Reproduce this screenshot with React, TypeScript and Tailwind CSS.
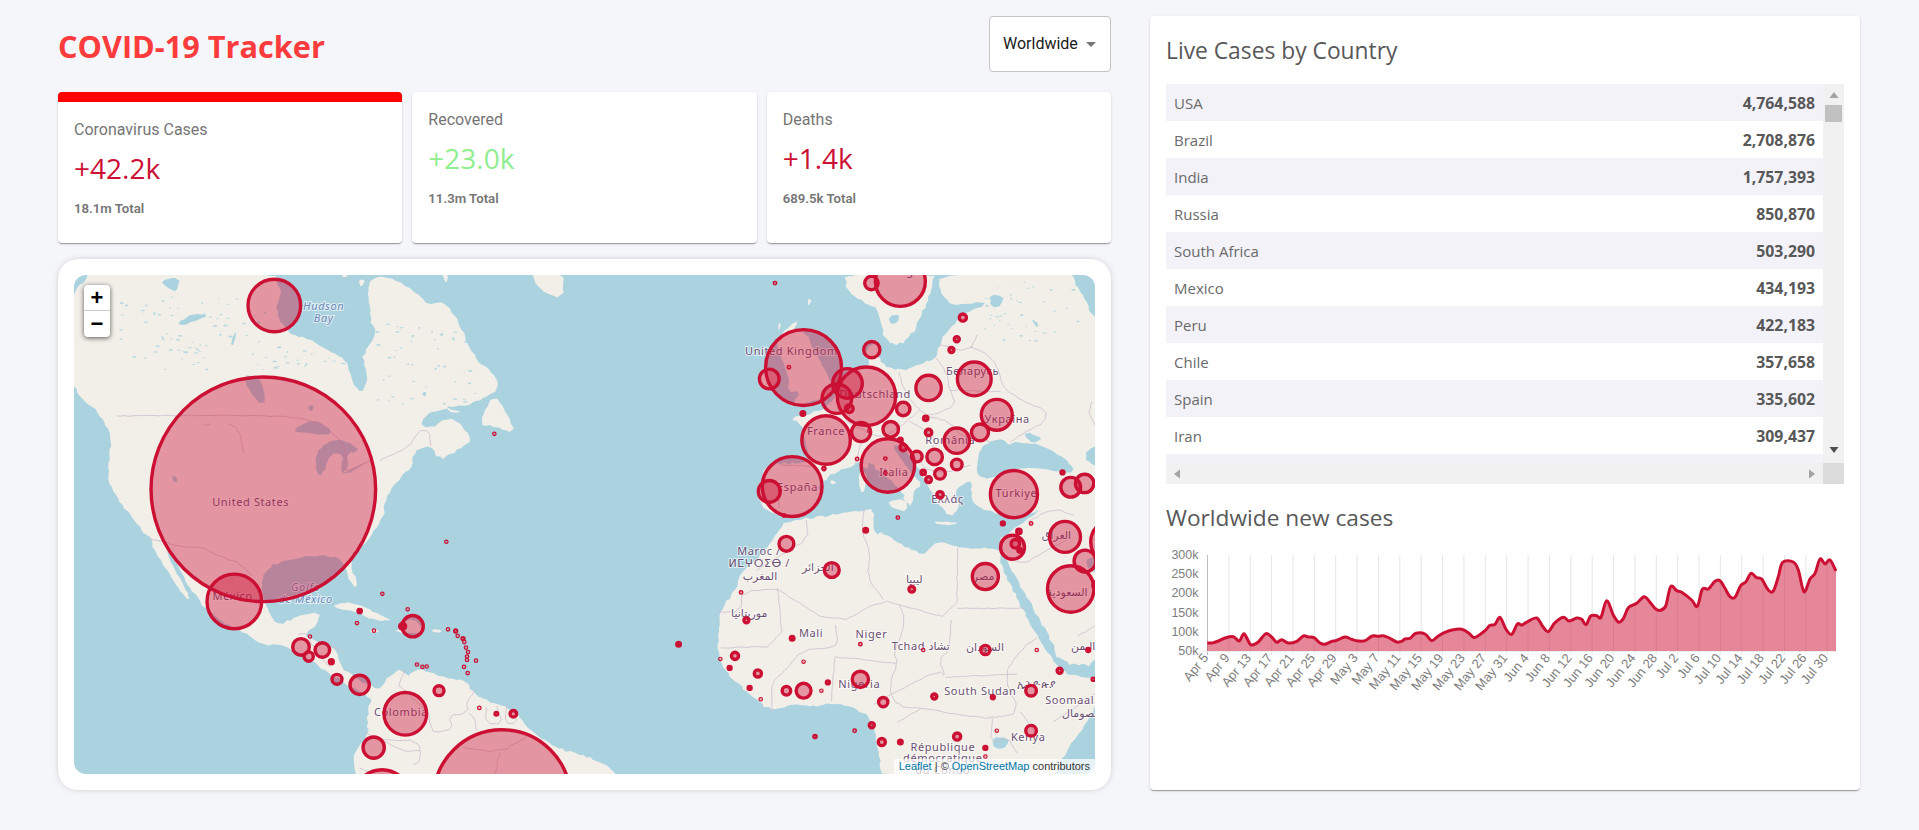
import React from "react";

type Pt = [number, number];
const Z5 = (p: Pt): Pt => [60 + p[0] / 3, 260 + p[1] / 2.9];
const Z6 = (p: Pt): Pt => [560 + p[0] / 2.8, 260 + p[1] / 2.9];
const Z9 = (p: Pt): Pt => [720 + p[0] / 2.96, 275 + p[1] / 3];
const Z10 = (p: Pt): Pt => [340 + p[0] / 3, 640 + p[1] / 2.89];
const pts = (f: (p: Pt) => Pt, a: number[]): Pt[] => {
  const o: Pt[] = [];
  for (let i = 0; i < a.length; i += 2) o.push(f([a[i], a[i + 1]]));
  return o;
};
const str = (a: Pt[]) => a.map((p) => p[0].toFixed(1) + "," + p[1].toFixed(1)).join(" ");
const rnd = (i: number) => {
  const v = Math.sin(i * 12.9898 + 4.1) * 43758.5453;
  return v - Math.floor(v);
};
let seed = 1;
const organic = (a: Pt[], closed = true, amp = 1.1): string => {
  const n = a.length;
  const sm: Pt[] = [];
  const m = closed ? n : n - 1;
  if (!closed) sm.push(a[0]);
  for (let i = 0; i < m; i++) {
    const p = a[i], q = a[(i + 1) % n];
    sm.push([p[0] * 0.75 + q[0] * 0.25, p[1] * 0.75 + q[1] * 0.25]);
    sm.push([p[0] * 0.25 + q[0] * 0.75, p[1] * 0.25 + q[1] * 0.75]);
  }
  if (!closed) sm.push(a[n - 1]);
  const out: Pt[] = [];
  const k = closed ? sm.length : sm.length - 1;
  for (let i = 0; i < k; i++) {
    const p = sm[i], q = sm[(i + 1) % sm.length];
    const len = Math.hypot(q[0] - p[0], q[1] - p[1]);
    const steps = Math.max(1, Math.round(len / 4));
    for (let s = 0; s < steps; s++) {
      const t = s / steps;
      seed++;
      out.push([p[0] + (q[0] - p[0]) * t + (rnd(seed) - 0.5) * 2 * amp, p[1] + (q[1] - p[1]) * t + (rnd(seed + 0.37) - 0.5) * 2 * amp]);
    }
  }
  if (!closed) out.push(sm[sm.length - 1]);
  return str(out);
};

const northAmerica = pts(Z5, [
  30, 30, 300, 30, 640, 30, 665, 100, 648, 140, 660, 180, 690, 215, 740, 225, 800, 260, 860, 290, 870, 340, 905, 390, 925, 340, 905, 290, 925, 250,
  950, 210, 930, 170, 925, 90, 930, 50, 1000, 52, 1080, 100, 1100, 130, 1160, 120, 1200, 190, 1240, 280, 1310, 340, 1315, 380, 1270, 400, 1230, 420,
  1130, 432, 1080, 470, 1110, 490, 1165, 455, 1205, 480, 1240, 525, 1180, 560, 1140, 580, 1105, 535, 1060, 560, 1060, 600, 1010, 640, 980, 690, 965, 760,
  905, 830, 872, 860, 880, 910, 895, 950, 875, 945, 850, 870, 790, 855, 700, 865, 620, 890, 600, 950, 620, 1010, 650, 1060, 720, 1030, 780, 1020, 770, 1060,
  730, 1090, 760, 1100, 830, 1130, 845, 1180, 880, 1210, 935, 1240, 965, 1248, 950, 1290, 900, 1250, 860, 1230, 800, 1195, 740, 1150, 680, 1120, 610, 1115,
  540, 1075, 450, 1030, 390, 950, 310, 820, 270, 810, 200, 730, 145, 650, 145, 600, 155, 520, 120, 440, 60, 400, 30, 345,
]);
const americaSmall = [
  [265, 810, 310, 820, 345, 900, 395, 985, 375, 980, 320, 900],
  [1255, 480, 1300, 385, 1345, 450, 1365, 505, 1300, 480],
  [820, 1000, 880, 990, 960, 1030, 1000, 1045, 940, 1045, 890, 1020, 830, 1010],
  [1025, 1050, 1060, 1040, 1095, 1075, 1050, 1085, 1000, 1075, 1025, 1070],
  [1118, 1072, 1145, 1072, 1145, 1080, 1118, 1080],
  [930, 1072, 955, 1072, 955, 1082, 930, 1082],
  [1410, 30, 1510, 30, 1510, 115, 1440, 90],
  [1150, 428, 1210, 440, 1180, 445],
  [835, 30, 870, 30, 855, 58],
  [895, 60, 915, 55, 905, 82],
  [1140, 30, 1165, 30, 1160, 75],
];
const americaLakes = [
  [695, 495, 760, 460, 820, 495, 800, 510, 730, 500],
  [770, 620, 765, 560, 800, 530, 830, 520, 870, 530, 900, 555, 860, 560, 865, 600, 845, 620, 905, 590, 930, 580, 850, 628, 842, 600, 852, 565, 810, 560, 790, 622],
  [545, 335, 600, 335, 620, 410, 590, 415],
  [750, 420, 762, 425, 755, 440, 745, 432],
  [350, 185, 400, 155, 450, 160, 400, 178, 370, 190],
  [300, 60, 360, 48, 350, 95, 325, 80],
  [510, 245, 530, 200, 522, 246],
  [335, 625, 350, 630, 352, 645, 338, 640],
  [1085, 385, 1100, 382, 1095, 400],
];

const southAmerica = pts(Z10, [
  95, 165, 120, 140, 150, 100, 190, 85, 205, 110, 215, 90, 260, 85, 310, 110, 380, 115, 395, 150, 440, 175, 480, 185, 540, 220, 570, 265, 660, 315, 740, 335,
  820, 375, 835, 420, 60, 420, 40, 375, 45, 320, 85, 270, 80, 230,
]);

const eurasiaA = pts(Z9, [
  650, -8, 650, 60, 700, 95, 790, 75, 770, 100, 730, 110, 660, 180, 650, 210, 640, 250, 600, 262, 530, 290, 480, 270, 470, 245, 445, 235, 440, 275, 400, 280, 350, 320, 330, 390,
  260, 420, 205, 430, 245, 450, 250, 500, 270, 565, 135, 565, 115, 650, 125, 700, 195, 728, 265, 712, 300, 650, 290, 630, 345, 590, 400, 568, 435, 552, 480, 600, 545, 650, 545, 680,
  570, 692, 575, 640, 600, 632, 560, 590, 505, 510, 540, 510, 600, 600, 630, 660, 650, 690, 680, 725, 710, 700, 690, 650, 740, 615, 745, 640, 745, 690, 850, 725, 905, 720, 960, 700,
]);
const eurasiaB = pts(Z6, [1240, 800, 1228, 830, 1250, 870, 1320, 1000, 1370, 1090, 1400, 1170, 1510, 1178]);
const eurasia = [...eurasiaA, ...eurasiaB, [1110, 600] as Pt, [1110, 265] as Pt];
const scandinavia = pts(Z9, [370, -8, 375, 50, 430, 85, 470, 100, 480, 170, 495, 200, 530, 210, 570, 180, 590, 130, 610, 90, 625, 40, 640, -8]);
const euroIslands = [
  [165, 190, 235, 130, 215, 170, 255, 170, 280, 230, 320, 300, 335, 340, 310, 370, 250, 385, 210, 395, 240, 350, 200, 350, 205, 310, 190, 270, 175, 230],
  [115, 300, 140, 280, 170, 300, 165, 330, 120, 345],
  [495, 680, 550, 670, 555, 710, 510, 700],
  [410, 590, 435, 590, 430, 650, 415, 650],
  [425, 545, 440, 540, 440, 580, 425, 580],
  [325, 615, 345, 620, 330, 630],
  [635, 738, 700, 742, 700, 750, 640, 748],
  [430, 225, 470, 195, 478, 240, 440, 250],
  [170, 150, 182, 140, 175, 170],
  [260, 70, 272, 75, 258, 95],
  [850, 505, 880, 505, 900, 520, 870, 540],
];
const euroWater = [
  [762, 603, 760, 570, 770, 520, 800, 500, 840, 490, 850, 510, 880, 500, 950, 510, 1030, 555, 1050, 592, 1000, 592, 930, 575, 860, 585, 800, 612],
  [800, 55, 840, 65, 835, 90, 800, 98],
  [920, 130, 945, 150, 935, 155],
  [900, 470, 960, 490, 930, 505, 905, 490],
  [500, 125, 530, 115, 530, 140, 505, 150],
  [590, 180, 608, 165, 600, 190],
];
const africa = pts(Z6, [
  1232, 835, 1110, 835, 1060, 815, 1030, 840, 1020, 855, 960, 830, 905, 790, 880, 800, 880, 720, 850, 725, 760, 740, 650, 755, 620, 770, 570, 850, 510, 900, 490, 960, 450, 1010, 440, 1100,
  445, 1160, 470, 1200, 520, 1250, 590, 1310, 650, 1290, 700, 1295, 780, 1285, 850, 1310, 880, 1350, 890, 1420, 905, 1510, 1380, 1510, 1400, 1450, 1510, 1290, 1510, 1215, 1430, 1205, 1400, 1185,
  1335, 1095, 1290, 1000, 1230, 875,
]);
const otherWater6 = [
  [1510, 530, 1460, 570, 1510, 605],
  [1470, 870, 1510, 855, 1510, 915, 1480, 895],
  [1210, 1385, 1255, 1385, 1255, 1410, 1215, 1420],
];
const borders6 = [
  [610, 955, 770, 1060, 905, 985, 950, 1000, 1110, 1045, 1113, 835],
  [610, 955, 625, 1120, 450, 1125],
  [610, 955, 510, 960, 505, 1020, 445, 1020],
  [770, 1060, 780, 1115, 750, 1125, 680, 1130, 630, 1190, 590, 1230, 595, 1310],
  [950, 1000, 965, 1040, 955, 1090, 935, 1135, 945, 1170, 920, 1240, 945, 1295, 1010, 1300, 1130, 1320, 1210, 1330, 1290, 1310, 1240, 1210, 1290, 1130, 1335, 1095],
  [1113, 1010, 1300, 1010],
  [1095, 1045, 1090, 1130, 1060, 1160, 1080, 1210, 1060, 1190, 945, 1250],
  [1080, 1210, 1280, 1200],
  [770, 1150, 940, 1170],
  [770, 1150, 760, 1280],
  [880, 1290, 945, 1250],
  [1380, 1340, 1440, 1300, 1510, 1250],
  [1290, 1310, 1350, 1400],
  [850, 725, 845, 790, 870, 850, 860, 920, 905, 985],
  [690, 755, 695, 810, 610, 860, 550, 900],
  [1210, 1330, 1205, 1400, 1255, 1385, 1280, 1430],
  [945, 1340, 1010, 1300],
  [1420, 810, 1350, 850, 1300, 880, 1260, 870],
  [1310, 760, 1380, 720, 1440, 740],
  [1450, 1090, 1498, 1060],
];
const borders9 = [
  [530, 290, 545, 350, 590, 405, 620, 425, 700, 390, 680, 345, 670, 290, 640, 250],
  [740, 215, 800, 240, 830, 300, 840, 340, 900, 380, 965, 405, 965, 440, 905, 470, 860, 500],
  [680, 345, 830, 350],
  [650, 210, 740, 230, 760, 180],
  [345, 350, 360, 430, 430, 470, 480, 490, 540, 450, 590, 405],
  [620, 425, 680, 440, 720, 490, 800, 500],
  [560, 440, 620, 470, 640, 510, 590, 560, 620, 590, 690, 590, 740, 570],
  [135, 620, 170, 620, 175, 700],
  [180, 570, 270, 575],
  [400, 568, 420, 500],
  [1100, 380, 1090, 420, 1125, 470],
];
const bordersA = [
  [170, 452, 640, 450, 760, 465, 830, 510, 860, 560, 850, 620, 930, 582],
  [960, 580, 1045, 545, 1075, 495, 1108, 495, 1112, 540],
  [265, 810, 310, 815, 370, 835, 420, 830, 480, 860, 510, 870, 540, 880, 575, 915],
  [715, 1085, 750, 1085, 755, 1125, 800, 1110, 845, 1135],
  [780, 1150, 810, 1180],
  [430, 480, 450, 475],
  [505, 475, 540, 495, 550, 560],
];
const bordersS = [
  [175, 130, 195, 85],
  [175, 130, 220, 170, 265, 210, 270, 240, 285, 270, 340, 255, 325, 220, 385, 210, 380, 180, 405, 145],
  [385, 210, 405, 225, 410, 262],
  [440, 195, 435, 240, 490, 245, 470, 190],
  [500, 190, 495, 240, 530, 240, 525, 205],
  [75, 270, 130, 290, 240, 290, 240, 350, 220, 360],
  [130, 290, 180, 320, 240, 320],
  [60, 370, 130, 400, 200, 405],
  [370, 310, 480, 325, 560, 280],
  [480, 325, 460, 405],
];

// Tiny lakes scattered over Canada and Finland/Russia, as in the tile layer.
const speckBoxes: number[][] = [
  [180, 100, 620, 320, 70],
  [640, 250, 880, 320, 18],
  [950, 180, 1290, 420, 60],
];
const specks: { x: number; y: number; rx: number; ry: number }[] = [];
speckBoxes.forEach((b, bi) => {
  for (let i = 0; i < b[4]; i++) {
    const p = Z5([b[0] + rnd(i * 3 + bi * 101 + 0.11) * (b[2] - b[0]), b[1] + rnd(i * 5 + bi * 71 + 0.23) * (b[3] - b[1])]);
    specks.push({ x: p[0], y: p[1], rx: 0.6 + rnd(i + 0.7) * 1.8, ry: 0.4 + rnd(i + 0.9) * 0.7 });
  }
});
for (let i = 0; i < 40; i++) {
  const p = Z9([780 + rnd(i * 7 + 0.31) * 300, 20 + rnd(i * 9 + 0.41) * 180]);
  specks.push({ x: p[0], y: p[1], rx: 0.6 + rnd(i + 0.2) * 1.4, ry: 0.4 + rnd(i + 0.6) * 0.8 });
}

const circles5: number[][] = [
  [643, 132, 84], [610, 665, 342], [523, 990, 87], [1058, 1062, 37], [1028, 1062, 14], [723, 1122, 30], [787, 1131, 27], [746, 1150, 19], [814, 1165, 11], [831, 1216, 20], [899, 1232, 34],
  [1036, 1316, 69], [941, 1414, 37], [1303, 504, 7], [1159, 817, 7], [967, 968, 7], [899, 1018, 10], [891, 1053, 7], [942, 1075, 7], [1043, 1013, 7], [750, 1092, 6], [1164, 1071, 7],
  [1187, 1076, 8], [1193, 1090, 7], [1209, 1098, 8], [1213, 1108, 7], [1218, 1124, 7], [1224, 1137, 7], [1221, 1150, 7], [1221, 1160, 7], [1248, 1162, 7], [1212, 1180, 7], [1223, 1198, 7],
  [1071, 1173, 7], [1087, 1180, 6], [1100, 1179, 6], [1137, 1249, 20], [1258, 1299, 7], [1309, 1316, 9], [1360, 1316, 15],
];
const circles6: number[][] = [
  [953, 62, 76], [872, 67, 24], [602, 67, 7], [682, 312, 113], [586, 345, 33], [641, 311, 7], [805, 358, 47], [775, 402, 47], [858, 395, 88], [810, 431, 16], [680, 445, 10],
  [873, 260, 28], [1032, 371, 41], [1160, 345, 53], [1128, 167, 15], [1111, 230, 12], [1096, 261, 12], [1223, 449, 49], [1176, 500, 29], [1111, 524, 41], [1032, 500, 14], [1024, 459, 11],
  [961, 432, 24], [926, 491, 27], [843, 499, 32], [745, 522, 74], [918, 596, 81], [650, 657, 90], [586, 671, 36], [953, 522, 10], [961, 544, 14], [999, 570, 20], [1049, 571, 27], [1111, 593, 20],
  [1064, 620, 20], [1032, 637, 13], [1017, 616, 11], [1064, 681, 14], [866, 495, 6], [832, 577, 7], [739, 605, 8], [911, 576, 7], [911, 618, 7], [627, 741, 7], [1271, 679, 72], [1407, 616, 9],
  [1430, 659, 33], [1469, 648, 31], [1414, 803, 49], [1550, 818, 70], [1470, 873, 36], [1430, 954, 71], [1505, 945, 18], [1267, 833, 39], [1275, 823, 17], [1287, 842, 10], [1285, 787, 11],
  [1240, 764, 9], [1319, 764, 7], [946, 747, 7], [856, 784, 10], [634, 823, 26], [761, 899, 26], [985, 955, 13], [1191, 918, 42], [507, 964, 7], [522, 1045, 12], [650, 1097, 10], [841, 1114, 7],
  [1017, 1131, 6], [1191, 1131, 18], [332, 1114, 10], [490, 1148, 15], [449, 1157, 6], [475, 1183, 9], [554, 1199, 15], [531, 1241, 9], [562, 1274, 6], [634, 1249, 17], [682, 1249, 26], [682, 1165, 6],
  [732, 1249, 6], [750, 1225, 9], [841, 1216, 28], [905, 1282, 18], [1048, 1266, 12], [1212, 1268, 9], [1319, 1249, 20], [1399, 1191, 12], [1493, 1216, 8], [1335, 1131, 6], [1479, 1131, 9],
  [1319, 1365, 20], [1223, 1365, 6], [1191, 1415, 9], [1191, 1440, 6], [1112, 1382, 15], [901, 1398, 15], [873, 1349, 12], [825, 1365, 7], [714, 1382, 8], [953, 1398, 10],
];
const bubbles: number[][] = [
  ...circles5.map((c) => [...Z5([c[0], c[1]]), c[2] / 3]),
  ...circles6.map((c) => [...Z6([c[0], c[1]]), c[2] / 2.85]),
  [502, 798, 70], [382, 798, 30],
];

const labels: { t: string; p: Pt; i?: boolean; c?: string }[] = [
  { t: "United States", p: Z5([572, 706]) },
  { t: "Hudson", p: Z5([791, 136]), i: true, c: "#6a87b8" },
  { t: "Bay", p: Z5([791, 171]), i: true, c: "#6a87b8" },
  { t: "México", p: Z5([518, 977]) },
  { t: "Golfo", p: Z5([737, 950]), i: true, c: "#6a87b8" },
  { t: "de México", p: Z5([737, 987]), i: true, c: "#6a87b8" },
  { t: "Colombia", p: Z5([1023, 1313]) },
  { t: "Sverige", p: Z6([950, 36]) },
  { t: "United Kingdom", p: Z6([648, 268]) },
  { t: "Deutschland", p: Z6([882, 391]) },
  { t: "France", p: Z6([745, 500]) },
  { t: "España", p: Z6([665, 660]) },
  { t: "Italia", p: Z6([935, 617]) },
  { t: "Беларусь", p: Z6([1155, 326]) },
  { t: "Україна", p: Z6([1252, 465]) },
  { t: "România", p: Z6([1093, 525]) },
  { t: "Ελλάς", p: Z6([1085, 697]) },
  { t: "Türkiye", p: Z6([1278, 680]) },
  { t: "العراق", p: Z6([1390, 800]) },
  { t: "مصر", p: Z6([1186, 918]) },
  { t: "السعودية", p: Z6([1420, 967]) },
  { t: "Maroc /", p: Z6([557, 848]) },
  { t: "ⵍⵎⵖⵔⵉⴱ /", p: Z6([558, 882]) },
  { t: "المغرب", p: Z6([560, 918]) },
  { t: "الجزائر", p: Z6([722, 893]) },
  { t: "ليبيا", p: Z6([992, 928]) },
  { t: "موريتانيا", p: Z6([530, 1028]) },
  { t: "Mali", p: Z6([703, 1085]) },
  { t: "Niger", p: Z6([872, 1087]) },
  { t: "Tchad تشاد", p: Z6([1010, 1122]) },
  { t: "السودان", p: Z6([1190, 1124]) },
  { t: "اليمن", p: Z6([1465, 1122]) },
  { t: "Nigeria", p: Z6([838, 1233]) },
  { t: "South Sudan", p: Z6([1177, 1252]) },
  { t: "ኢትዮጵያ", p: Z6([1335, 1232]) },
  { t: "Soomaaliya", p: Z6([1450, 1279]) },
  { t: "الصومال", p: Z6([1460, 1317]) },
  { t: "Kenya", p: Z6([1311, 1386]) },
  { t: "République", p: Z6([1072, 1416]) },
  { t: "démocratique", p: Z6([1072, 1448]) },
  { t: "du Congo", p: Z6([1072, 1482]) },
];

const land = "#f2efe9";
const water = "#aad3df";
const landShapes: string[] = [
  organic(northAmerica),
  ...americaSmall.map((a) => organic(pts(Z5, a), true, 0.6)),
  organic(southAmerica),
  organic(eurasia),
  organic(scandinavia),
  organic(africa),
  ...euroIslands.map((a) => organic(pts(Z9, a), true, 0.6)),
];
const waterShapes: string[] = [
  ...americaLakes.map((a) => organic(pts(Z5, a), true, 0.5)),
  ...euroWater.map((a) => organic(pts(Z9, a), true, 0.7)),
  ...otherWater6.map((a) => organic(pts(Z6, a), true, 0.6)),
];
const borderLines: string[] = [
  ...bordersA.map((a) => organic(pts(Z5, a), false, 0.5)),
  ...bordersS.map((a) => organic(pts(Z10, a), false, 0.6)),
  ...borders6.map((a) => organic(pts(Z6, a), false, 0.5)),
  ...borders9.map((a) => organic(pts(Z9, a), false, 0.6)),
];

function MapArt() {
  return (
    <svg viewBox="74 275 1021 499" className="block h-full w-full">
      <rect x="74" y="275" width="1021" height="499" fill={water} />
      {landShapes.map((s, i) => <polygon key={i} points={s} fill={land} />)}
      {waterShapes.map((s, i) => <polygon key={i} points={s} fill={water} />)}
      {specks.map((s, i) => <ellipse key={i} cx={s.x} cy={s.y} rx={s.rx} ry={s.ry} fill={water} fillOpacity="0.8" />)}
      <g fill="none" stroke="#cdbccd" strokeWidth="0.8">
        {borderLines.map((s, i) => <polyline key={i} points={s} />)}
      </g>
      <g fontFamily="'Noto Sans','DejaVu Sans',sans-serif" fontSize="11" letterSpacing="0.6" textAnchor="middle" dominantBaseline="middle" stroke="#ffffff" strokeOpacity="0.65" strokeWidth="2" paintOrder="stroke">
        {labels.map((l, i) => (
          <text key={i} x={l.p[0]} y={l.p[1]} fill={l.c || "#6b4f72"} fontStyle={l.i ? "italic" : "normal"}>
            {l.t}
          </text>
        ))}
      </g>
      <g fill="#CC1034" fillOpacity="0.4" stroke="#CC1034" strokeWidth="3.4">
        {bubbles.map((c, i) => <circle key={i} cx={c[0]} cy={c[1]} r={Math.max(c[2] - 1.7, 0.6)} />)}
      </g>
    </svg>
  );
}

const line7 = [
  142, 309, 160, 308, 175, 303, 195, 294, 220, 290, 238, 303, 252, 281, 270, 312, 280, 314, 295, 306, 318, 281, 335, 291, 350, 307, 365, 299, 385, 309, 410, 304, 430, 288, 445, 291, 462, 293,
  480, 309, 495, 313, 515, 304, 530, 301, 555, 291, 575, 298, 595, 303, 615, 302, 637, 288, 655, 289, 670, 287, 690, 295, 710, 306, 725, 304, 735, 297, 750, 295, 768, 280, 795, 282, 815, 302,
  835, 288, 860, 275, 880, 269, 905, 268, 925, 278, 940, 292, 950, 290, 975, 272, 990, 256, 1005, 253,
];
const line8 = [
  0, 232, 18, 268, 35, 283, 52, 252, 65, 255, 83, 245, 110, 234, 130, 262, 145, 275, 165, 248, 190, 232, 208, 243, 230, 234, 245, 238, 258, 254, 272, 228, 290, 227, 303, 232, 320, 182, 340, 225,
  355, 246, 370, 236, 385, 203, 410, 190, 432, 170, 447, 183, 465, 205, 480, 211, 497, 198, 512, 140, 530, 152, 545, 157, 575, 180, 592, 199, 607, 148, 625, 147, 645, 124, 660, 122, 675, 145,
  690, 170, 705, 172, 722, 137, 738, 125, 753, 100, 770, 113, 785, 117, 805, 150, 820, 153, 835, 110, 848, 67, 880, 66, 895, 90, 912, 155, 930, 117, 945, 100, 960, 57, 975, 72, 990, 60, 1008, 93,
];
const chartPts: Pt[] = [
  ...pts((p) => [p[0] / 3, 540 + p[1] / 3], line7),
  ...pts((p) => [340 + p[0] / 3, 540 + p[1] / 3], line8),
].map((p) => [p[0] + 1160, p[1]] as Pt);
const smooth = (a: Pt[]) => {
  let d = `M${a[0][0].toFixed(1)} ${a[0][1].toFixed(1)}`;
  for (let i = 0; i < a.length - 1; i++) {
    const p0 = a[Math.max(i - 1, 0)], p1 = a[i], p2 = a[i + 1], p3 = a[Math.min(i + 2, a.length - 1)];
    const c1: Pt = [p1[0] + (p2[0] - p0[0]) / 6, p1[1] + (p2[1] - p0[1]) / 6];
    const c2: Pt = [p2[0] - (p3[0] - p1[0]) / 6, p2[1] - (p3[1] - p1[1]) / 6];
    d += `C${c1[0].toFixed(1)} ${c1[1].toFixed(1)} ${c2[0].toFixed(1)} ${c2[1].toFixed(1)} ${p2[0].toFixed(1)} ${p2[1].toFixed(1)}`;
  }
  return d;
};
const linePath = smooth(chartPts);
const xEnd = chartPts[chartPts.length - 1][0];
const areaPath = `${linePath}L${xEnd.toFixed(1)} 651L1207 651Z`;
const ticks = ["Apr 5", "Apr 9", "Apr 13", "Apr 17", "Apr 21", "Apr 25", "Apr 29", "May 3", "May 7", "May 11", "May 15", "May 19", "May 23", "May 27", "May 31", "Jun 4", "Jun 8", "Jun 12", "Jun 16", "Jun 20", "Jun 24", "Jun 28", "Jul 2", "Jul 6", "Jul 10", "Jul 14", "Jul 18", "Jul 22", "Jul 26", "Jul 30"];
const yTicks: [string, number][] = [["300k", 555], ["250k", 574], ["200k", 593], ["150k", 613], ["100k", 632], ["50k", 651]];

function Chart() {
  return (
    <svg viewBox="1166 545 678 170" className="block h-[170px] w-[678px]">
      {ticks.map((_, i) => {
        const x = 1207.5 + i * 21.37;
        return <line key={i} x1={x} x2={x} y1="555" y2="655" stroke={i === 0 ? "#bdbdbd" : "#e6e6e6"} strokeWidth="1" />;
      })}
      <line x1="1203" x2="1836" y1="651.5" y2="651.5" stroke="#ececec" />
      <path d={areaPath} fill="#CC1034" fillOpacity="0.5" />
      <path d={linePath} fill="none" stroke="#CC1034" strokeWidth="3" />
      <g fontFamily="'Liberation Sans',Arial,sans-serif" fontSize="13" fill="#7d7d7d">
        {yTicks.map(([t, y]) => (
          <text key={t} x="1198.5" y={y + 4} fontSize="12.5" textAnchor="end">{t}</text>
        ))}
        {ticks.map((t, i) => {
          const x = 1209 + i * 21.37;
          return <text key={t} transform={`translate(${x} 658) rotate(-51)`} textAnchor="end">{t}</text>;
        })}
      </g>
    </svg>
  );
}

const rows: [string, string][] = [
  ["USA", "4,764,588"], ["Brazil", "2,708,876"], ["India", "1,757,393"], ["Russia", "850,870"], ["South Africa", "503,290"],
  ["Mexico", "434,193"], ["Peru", "422,183"], ["Chile", "357,658"], ["Spain", "335,602"], ["Iran", "309,437"],
];

const Tri = ({ d, c }: { d: string; c: string }) => (
  <svg viewBox="0 0 10 10" className="h-[10px] w-[10px]"><path d={d} fill={c} /></svg>
);

const cardShadow = "shadow-[0_2px_1px_-1px_rgba(0,0,0,0.2),0_1px_1px_0_rgba(0,0,0,0.14),0_1px_3px_0_rgba(0,0,0,0.12)]";

function Stat({ title, value, total, color, active }: { title: string; value: string; total: string; color: string; active?: boolean }) {
  return (
    <div className={`h-[151px] flex-1 overflow-hidden rounded bg-white ${cardShadow}`}>
      {active && <div className="h-[10px] bg-[#ff0000]" />}
      <div className="px-4 pt-4">
        <div className="mb-[6px] h-6 font-['Roboto'] text-base leading-6 text-[#757575]">{title}</div>
        <div className={`mb-[11px] h-10 font-['Open_Sans'] text-[28px] leading-10 ${color}`}>{value}</div>
        <div className="h-5 font-['Roboto'] text-[13.2px] leading-5 font-semibold text-[#757575]">{total}</div>
      </div>
    </div>
  );
}

export default function App() {
  return (
    <div className="flex h-[830px] w-[1919px] gap-[39px] overflow-hidden bg-[#f5f6fa] pt-4 pl-[58px]">
      <div className="w-[1053px]">
        <div className="mb-[20px] flex h-[56px] items-center justify-between">
          <h1 className="mt-[5px] font-['Open_Sans'] text-[30.7px] leading-none font-bold text-[#fc3c3c]">COVID-19 Tracker</h1>
          <div className="flex h-[56px] w-[122px] items-center rounded border border-[#c4c4c4] bg-white pl-[13px] font-['Roboto'] text-base text-[#1a1a1a]">
            Worldwide
            <svg viewBox="0 0 10 5" className="ml-2 h-[5px] w-[10px]"><path d="M0 0h10L5 5z" fill="#757575" /></svg>
          </div>
        </div>
        <div className="mb-4 flex gap-[10px]">
          <Stat active title="Coronavirus Cases" value="+42.2k" total="18.1m Total" color="text-[#cc1034]" />
          <Stat title="Recovered" value="+23.0k" total="11.3m Total" color="text-[#90ee90]" />
          <Stat title="Deaths" value="+1.4k" total="689.5k Total" color="text-[#cc1034]" />
        </div>
        <div className="h-[531px] rounded-[20px] bg-white p-4 shadow-[0_0_8px_-4px_rgba(0,0,0,0.5)]">
          <div className="relative h-[499px] overflow-hidden rounded-xl">
            <MapArt />
            <div className="absolute top-[10px] left-[10px] w-[26px] overflow-hidden rounded bg-white font-['Liberation_Sans'] text-black shadow-[0_1px_5px_rgba(0,0,0,0.65)]">
              <div className="flex h-[26px] items-center justify-center border-b border-[#cccccc] text-[22px] leading-none font-bold">+</div>
              <div className="flex h-[26px] items-center justify-center text-[22px] leading-none font-bold">−</div>
            </div>
            <div className="absolute right-0 bottom-0 bg-white/70 px-[5px] font-['Liberation_Sans'] text-[11px] leading-[15px] text-[#333333]">
              <span className="text-[#0078a8]">Leaflet</span> | © <span className="text-[#0078a8]">OpenStreetMap</span> contributors
            </div>
          </div>
        </div>
      </div>

      <div className={`h-[774px] w-[710px] rounded bg-white pt-[19px] pl-4 ${cardShadow}`}>
        <h3 className="mb-[17px] h-8 font-['Open_Sans'] text-[22.8px] leading-8 text-[#585858]">Live Cases by Country</h3>
        <div className="h-[400px] w-[678px] overflow-hidden">
          <div className="flex h-[379px]">
            <div className="flex w-[657px] flex-col">
              {rows.map(([n, v], i) => (
                <div key={n} className={`flex h-[37px] shrink-0 items-center justify-between px-2 pt-[2px] font-['Open_Sans'] text-[15px] text-[#6a6a6a] ${i % 2 === 0 ? "bg-[#f3f2f8]" : "bg-white"}`}>
                  <span>{n}</span>
                  <span className="text-[15.8px] font-bold text-[#585858]">{v}</span>
                </div>
              ))}
              <div className="flex-1 bg-[#f3f2f8]" />
            </div>
            <div className="flex w-[21px] flex-col items-center bg-[#f1f1f1]">
              <div className="flex h-[21px] w-full items-center justify-center"><Tri d="M5 2L9.500 8H.5z" c="#a3a3a3" /></div>
              <div className="h-[17px] w-[17px] bg-[#c1c1c1]" />
              <div className="mt-auto flex h-[21px] w-full items-center justify-center pb-[6px]"><Tri d="M5 8L9.500 2H.5z" c="#505050" /></div>
            </div>
          </div>
          <div className="flex h-[21px]">
            <div className="flex w-[657px] items-center justify-between bg-[#f1f1f1] px-[6px]">
              <Tri d="M2 5L8 .5v9z" c="#a3a3a3" />
              <Tri d="M8 5L2 .5v9z" c="#a3a3a3" />
            </div>
            <div className="w-[21px] bg-[#dcdcdc]" />
          </div>
        </div>
        <h3 className="mt-[18px] mb-[11px] h-8 font-['Open_Sans'] text-[22.7px] leading-8 text-[#585858]">Worldwide new cases</h3>
        <Chart />
      </div>
    </div>
  );
}
